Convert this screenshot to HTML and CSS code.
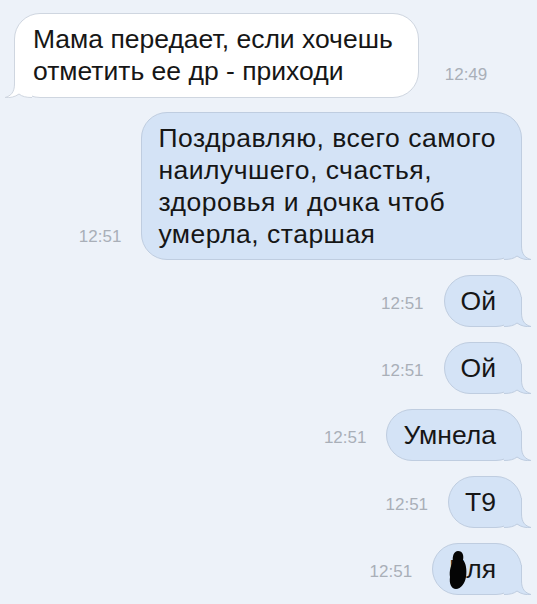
FILE: index.html
```html
<!DOCTYPE html>
<html lang="ru">
<head>
    <meta charset="UTF-8">
    <title>Сообщения</title>
    <link rel="stylesheet" href="styles.css">
</head>
<body>
    <!-- Chat -->
    <div class="chat">

        <div class="row in">
            <div class="bubble">
                Мама передает, если хочешь<br>отметить ее др - приходи
                <svg class="tail" width="28" height="30" viewBox="0 0 28 30">
                    <path class="tail-fill" d="M17.5 0 L17.5 16 C17.5 24 21 28 27 29.5 C22 30 17 29 13 26 C10 28.5 6 29.5 0 29.5 L0 0 Z"/>
                    <path class="tail-line" d="M17.5 0 L17.5 16 C17.5 24 21 28 27 29.5 C22 30 17 29 13 26 C10 28.5 6 29.5 0 29.5"/>
                </svg>
            </div>
            <span class="time">12:49</span>
        </div>

        <div class="row out">
            <span class="time">12:51</span>
            <div class="bubble long">
                Поздравляю, всего самого<br>наилучшего, счастья,<br>здоровья и дочка чтоб<br>умерла, старшая
                <svg class="tail" width="28" height="30" viewBox="0 0 28 30">
                    <path class="tail-fill" d="M17.5 0 L17.5 16 C17.5 24 21 28 27 29.5 C22 30 17 29 13 26 C10 28.5 6 29.5 0 29.5 L0 0 Z"/>
                    <path class="tail-line" d="M17.5 0 L17.5 16 C17.5 24 21 28 27 29.5 C22 30 17 29 13 26 C10 28.5 6 29.5 0 29.5"/>
                </svg>
            </div>
        </div>

        <div class="row out">
            <span class="time">12:51</span>
            <div class="bubble">
                Ой
                <svg class="tail" width="28" height="30" viewBox="0 0 28 30">
                    <path class="tail-fill" d="M17.5 0 L17.5 16 C17.5 24 21 28 27 29.5 C22 30 17 29 13 26 C10 28.5 6 29.5 0 29.5 L0 0 Z"/>
                    <path class="tail-line" d="M17.5 0 L17.5 16 C17.5 24 21 28 27 29.5 C22 30 17 29 13 26 C10 28.5 6 29.5 0 29.5"/>
                </svg>
            </div>
        </div>

        <div class="row out">
            <span class="time">12:51</span>
            <div class="bubble">
                Ой
                <svg class="tail" width="28" height="30" viewBox="0 0 28 30">
                    <path class="tail-fill" d="M17.5 0 L17.5 16 C17.5 24 21 28 27 29.5 C22 30 17 29 13 26 C10 28.5 6 29.5 0 29.5 L0 0 Z"/>
                    <path class="tail-line" d="M17.5 0 L17.5 16 C17.5 24 21 28 27 29.5 C22 30 17 29 13 26 C10 28.5 6 29.5 0 29.5"/>
                </svg>
            </div>
        </div>

        <div class="row out">
            <span class="time">12:51</span>
            <div class="bubble">
                Умнела
                <svg class="tail" width="28" height="30" viewBox="0 0 28 30">
                    <path class="tail-fill" d="M17.5 0 L17.5 16 C17.5 24 21 28 27 29.5 C22 30 17 29 13 26 C10 28.5 6 29.5 0 29.5 L0 0 Z"/>
                    <path class="tail-line" d="M17.5 0 L17.5 16 C17.5 24 21 28 27 29.5 C22 30 17 29 13 26 C10 28.5 6 29.5 0 29.5"/>
                </svg>
            </div>
        </div>

        <div class="row out">
            <span class="time">12:51</span>
            <div class="bubble">
                Т9
                <svg class="tail" width="28" height="30" viewBox="0 0 28 30">
                    <path class="tail-fill" d="M17.5 0 L17.5 16 C17.5 24 21 28 27 29.5 C22 30 17 29 13 26 C10 28.5 6 29.5 0 29.5 L0 0 Z"/>
                    <path class="tail-line" d="M17.5 0 L17.5 16 C17.5 24 21 28 27 29.5 C22 30 17 29 13 26 C10 28.5 6 29.5 0 29.5"/>
                </svg>
            </div>
        </div>

        <div class="row out">
            <span class="time">12:51</span>
            <div class="bubble">
                Бля
                <!-- scribble over the first letter -->
                <svg class="scribble" width="20" height="40" viewBox="0 0 20 40">
                    <path d="M10 1 C15 1 16 6 15 10 C18 13 19 20 18 27 C17 33 13 39 8 39 C3 39 1 33 2 27 C1 21 3 15 5 12 C4 6 6 1 10 1 Z"/>
                </svg>
                <svg class="tail" width="28" height="30" viewBox="0 0 28 30">
                    <path class="tail-fill" d="M17.5 0 L17.5 16 C17.5 24 21 28 27 29.5 C22 30 17 29 13 26 C10 28.5 6 29.5 0 29.5 L0 0 Z"/>
                    <path class="tail-line" d="M17.5 0 L17.5 16 C17.5 24 21 28 27 29.5 C22 30 17 29 13 26 C10 28.5 6 29.5 0 29.5"/>
                </svg>
            </div>
        </div>

    </div>
</body>
</html>
```

FILE: styles.css
```css
/* Page */
body {
    margin: 0;
    background: #edf2f9;
    font-family: "Liberation Sans", Arial, sans-serif;
    color: #161616;
}

/* Chat list */
.chat {
    display: flex;
    flex-direction: column;
    gap: 15px;
    padding: 13px 15px 0 14px;
}

.chat .row.in + .row {
    margin-top: -1px;
}

.row {
    display: flex;
    align-items: flex-end;
}

.row.in {
    justify-content: flex-start;
    gap: 26px;
}

.row.out {
    justify-content: flex-end;
    gap: 20px;
}

/* Bubbles */
.bubble {
    position: relative;
    font-size: 26.5px;
    line-height: 32px;
    padding: 9px 25px 9px 16px;
    border-radius: 26px;
    white-space: nowrap;
}

.bubble.long {
    letter-spacing: 0.5px;
}

.row.in .bubble {
    background: #fff;
    border: 1px solid #cfd6e0;
    padding: 9px 25px 10px 18px;
}

.row.out .bubble {
    background: #d4e3f6;
    border: 1px solid #bfcde0;
}

/* Tail */
.tail {
    position: absolute;
    bottom: -1px;
    right: -11px;
}

.row.in .tail {
    right: auto;
    left: -11px;
    transform: scaleX(-1);
}

.tail-line {
    fill: none;
    stroke-width: 1;
}

.row.in .tail-fill { fill: #fff; }
.row.in .tail-line { stroke: #cfd6e0; }
.row.out .tail-fill { fill: #d4e3f6; }
.row.out .tail-line { stroke: #bfcde0; }

/* Hidden first letter */
.scribble {
    position: absolute;
    left: 15px;
    top: 6px;
}

.scribble path {
    fill: #050505;
}

/* Time stamps */
.time {
    font-size: 17px;
    line-height: 20px;
    color: #a9afb8;
    margin-bottom: 13px;
}
```
